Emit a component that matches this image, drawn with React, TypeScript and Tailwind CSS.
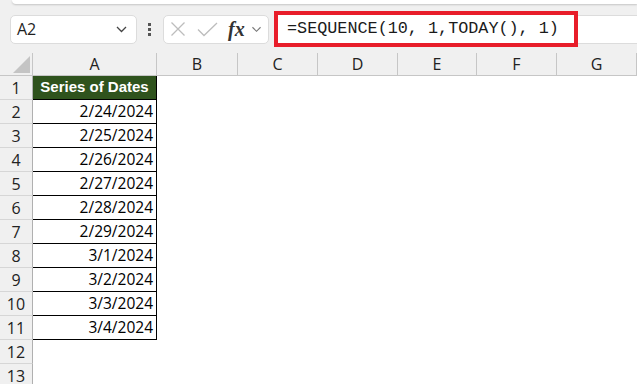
import React from 'react';

const cols = [
  { label: 'A', w: 'w-[124px]' },
  { label: 'B', w: 'w-[81px]' },
  { label: 'C', w: 'w-[80px]' },
  { label: 'D', w: 'w-[80px]' },
  { label: 'E', w: 'w-[79px]' },
  { label: 'F', w: 'w-[80px]' },
  { label: 'G', w: 'w-[80px]' },
];

const dates = [
  '2/24/2024',
  '2/25/2024',
  '2/26/2024',
  '2/27/2024',
  '2/28/2024',
  '2/29/2024',
  '3/1/2024',
  '3/2/2024',
  '3/3/2024',
  '3/4/2024',
];

function Chevron() {
  return (
    <svg width="11" height="7" viewBox="0 0 11 7" fill="none">
      <path d="M1 1l4.5 4.5L10 1" stroke="#444" strokeWidth="1.3" />
    </svg>
  );
}

function Toolbar() {
  return (
    <div className="flex h-[49px] items-center pt-[1px]">
      {/* name box */}
      <div className="ml-[10px] flex h-[29px] w-[127px] items-center justify-between rounded-[5px] border border-[#dcdcdc] bg-white pl-[6px] pr-[9px]">
        <span className="font-['Open_Sans'] text-[16px] text-[#1f1f1f]">A2</span>
        <Chevron />
      </div>
      {/* vertical dots */}
      <div className="ml-[10px] flex w-[5px] flex-col items-center gap-[2px]">
        <span className="block h-[3px] w-[3px] bg-[#555]" />
        <span className="block h-[3px] w-[3px] bg-[#555]" />
        <span className="block h-[3px] w-[3px] bg-[#555]" />
      </div>
      {/* cancel / enter / fx */}
      <div className="ml-[11px] flex h-[29px] w-[106px] items-center rounded-[5px] border border-[#dcdcdc] bg-white pl-[6px]">
        <svg width="16" height="16" viewBox="0 0 16 16">
          <path d="M1.5 1.5l13 13M14.5 1.5l-13 13" stroke="#bdbdbd" strokeWidth="1.3" />
        </svg>
        <svg className="ml-[11px]" width="21" height="15" viewBox="0 0 21 15">
          <path d="M1 7.5l6 6L20 1" stroke="#bdbdbd" strokeWidth="1.3" fill="none" />
        </svg>
        <span className="ml-[10px] font-['Liberation_Serif'] text-[20px] leading-none font-bold italic text-[#333]">fx</span>
        <span className="ml-[6px] scale-90">
          <svg width="11" height="7" viewBox="0 0 11 7" fill="none">
            <path d="M1 1l4.5 4.5L10 1" stroke="#777" strokeWidth="1.2" />
          </svg>
        </span>
      </div>
      {/* formula box with red outline */}
      <div className="ml-[5px] flex h-[36px] w-[304px] items-center border-4 border-[#e81d2a] bg-white pl-[9px]">
        <span className="font-['Liberation_Mono'] text-[16.8px] text-[#1a1a1a]">=SEQUENCE(10, 1,TODAY(), 1)</span>
      </div>
      <div className="h-[29px] flex-1 border-y border-[#dcdcdc] bg-white" />
    </div>
  );
}

function HeaderRow() {
  return (
    <div className="flex h-[23px]">
      <div className="flex h-full w-[33px] items-end justify-end border-r border-b border-[#c6c6c6] bg-[#f0f0f0] pr-[2px] pb-[2px]">
        <svg width="17" height="17" viewBox="0 0 17 17">
          <path d="M17 0L17 17L0 17Z" fill="#c4c4c4" />
        </svg>
      </div>
      {cols.map((c) => (
        <div
          key={c.label}
          className={`${c.w} flex h-full items-center justify-center border-r border-b border-[#c6c6c6] bg-[#f0f0f0] font-['Open_Sans'] text-[16px] text-[#222]`}
        >
          {c.label}
        </div>
      ))}
    </div>
  );
}

function Row({ n, children, boxed }: { n: number; children?: React.ReactNode; boxed?: boolean }) {
  return (
    <div className="flex h-[24px]">
      <div className="flex h-full w-[33px] items-center justify-center border-r border-b border-r-[#b0b0b0] border-b-[#d6d6d6] bg-[#f0f0f0] font-['Open_Sans'] text-[16px] text-[#222]">
        {n}
      </div>
      <div
        className={
          boxed
            ? 'h-full w-[124px] border-r border-b border-black'
            : 'h-full w-[124px]'
        }
      >
        {children}
      </div>
      <div className="h-full flex-1 bg-white" />
    </div>
  );
}

export default function App() {
  return (
    <div className="h-[384px] w-[637px] overflow-hidden bg-[#f0f0f0] font-['Liberation_Sans',sans-serif]">
      <div className="ml-[12px] h-[4px] rounded-bl-[6px] bg-white shadow-[0_1px_2px_rgba(0,0,0,0.18)]" />
      <Toolbar />
      <HeaderRow />
      <div className="bg-white">
        <Row n={1} boxed>
          <div className="flex h-full items-center justify-center bg-[#2f531d] text-[15px] font-bold text-white">
            Series of Dates
          </div>
        </Row>
        {dates.map((d, i) => (
          <Row key={d} n={i + 2} boxed>
            <div className="flex h-full items-center justify-end pr-[3px] font-['Open_Sans'] text-[15.5px] text-black">{d}</div>
          </Row>
        ))}
        <Row n={12} />
        <Row n={13} />
      </div>
    </div>
  );
}
